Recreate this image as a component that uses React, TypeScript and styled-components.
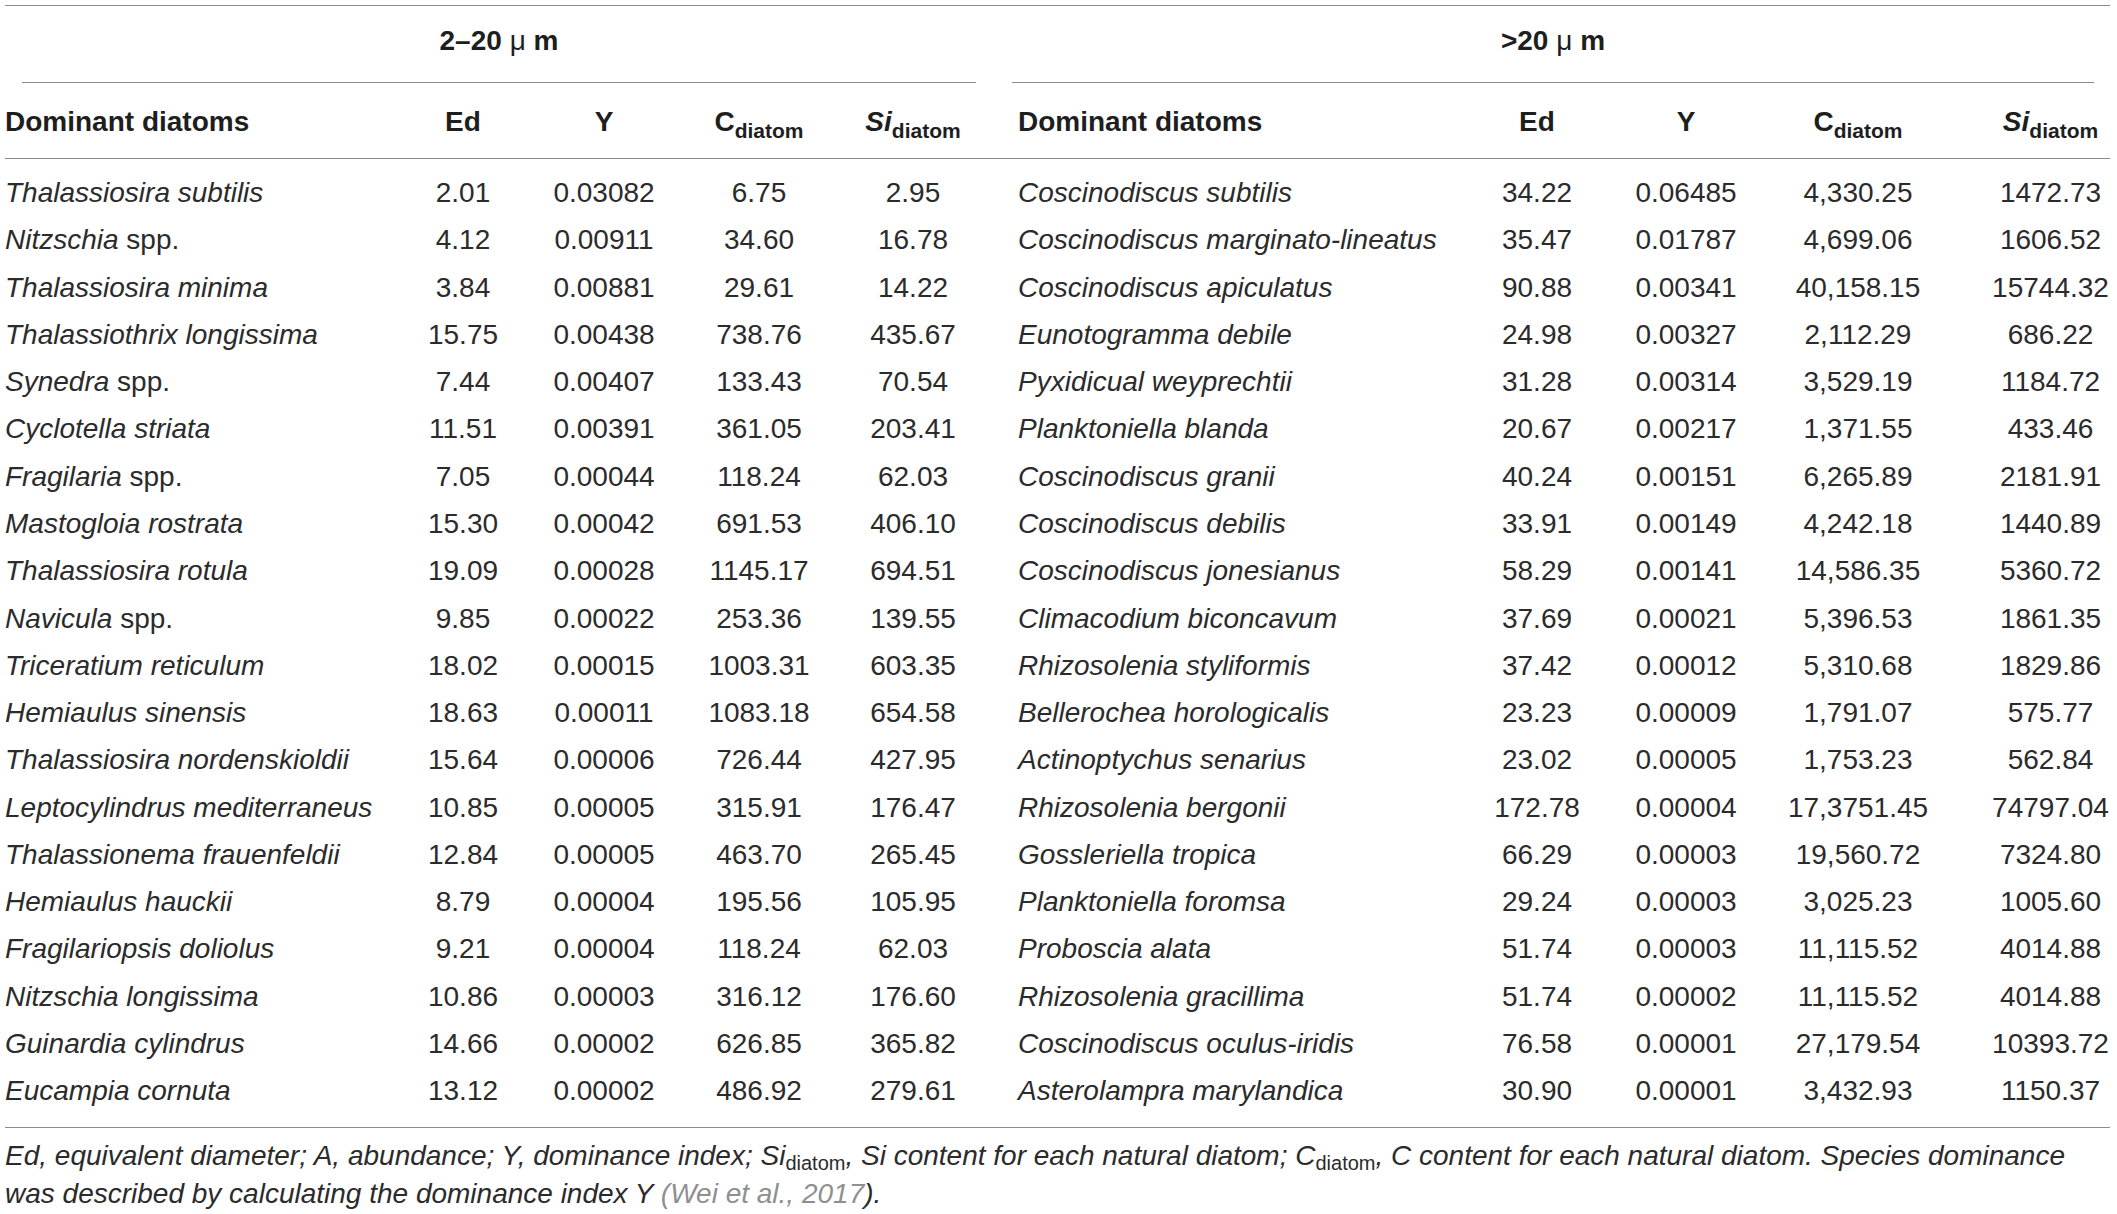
import React from "react";
import styled, { createGlobalStyle } from "styled-components";

const GlobalStyle = createGlobalStyle`
  html, body {
    margin: 0;
    padding: 0;
    background: #ffffff;
  }
  body {
    font-family: "Liberation Sans", Arial, Helvetica, sans-serif;
    color: #2b2b2b;
  }
`;

const COLS = "390px 136px 146px 164px 144px 33px 447px 144px 154px 190px 157px";
const RULE = "#8c8c8c";

const Page = styled.div`
  padding: 5px 0 0 5px;
`;

const Table = styled.div`
  width: 2105px;
  border-top: 1px solid ${RULE};
`;

const GroupRow = styled.div`
  display: grid;
  grid-template-columns: ${COLS};
`;

const GroupTitle = styled.div<{ $col: string; $inL: number; $inR: number }>`
  grid-column: ${(p) => p.$col};
  margin-left: ${(p) => p.$inL}px;
  margin-right: ${(p) => p.$inR}px;
  padding: 20.5px 0 27.5px;
  border-bottom: 1px solid ${RULE};
  text-align: center;
  font-size: 28px;
  line-height: 28px;
  font-weight: 700;
  color: #1e1e1e;
`;

const Mu = styled.span`
  font-weight: 400;
`;

const HeadRow = styled.div`
  display: grid;
  grid-template-columns: ${COLS};
  padding: 24.5px 0 22.5px;
  border-bottom: 1px solid ${RULE};
`;

const HeadCell = styled.div<{ $align?: "left" | "center"; $pl?: number }>`
  text-align: ${(p) => p.$align || "center"};
  padding-left: ${(p) => p.$pl || 0}px;
  font-size: 28px;
  line-height: 28px;
  font-weight: 700;
  color: #1e1e1e;
  white-space: nowrap;
`;

const HeadSub = styled.sub`
  font-size: 21px;
  font-style: normal;
  font-weight: 700;
  vertical-align: -7px;
  line-height: 0;
`;

const Body = styled.div`
  padding: 10.35px 0 12px;
  border-bottom: 1px solid ${RULE};
`;

const Row = styled.div`
  display: grid;
  grid-template-columns: ${COLS};
`;

const Cell = styled.div<{ $align?: "left" | "center"; $pl?: number }>`
  padding: 9.65px 0 9.65px ${(p) => p.$pl || 0}px;
  text-align: ${(p) => p.$align || "center"};
  font-size: 28px;
  line-height: 28px;
  white-space: nowrap;
  color: #2b2b2b;
`;

const Gap = styled.div``;

const Footnote = styled.p`
  margin: 0;
  width: 2105px;
  padding-top: 9px;
  font-size: 28px;
  line-height: 38px;
  font-style: italic;
  color: #2b2b2b;
`;

const NoteSub = styled.sub`
  font-size: 20px;
  font-style: normal;
  vertical-align: -5px;
  line-height: 0;
`;

const Cite = styled.span`
  color: #8f8f8f;
`;

type Name = { genus: string; spp?: boolean };
type Datum = [Name, string, string, string, string];

const n = (genus: string, spp = false): Name => ({ genus, spp });

const LEFT: Datum[] = [
  [n("Thalassiosira subtilis"), "2.01", "0.03082", "6.75", "2.95"],
  [n("Nitzschia", true), "4.12", "0.00911", "34.60", "16.78"],
  [n("Thalassiosira minima"), "3.84", "0.00881", "29.61", "14.22"],
  [n("Thalassiothrix longissima"), "15.75", "0.00438", "738.76", "435.67"],
  [n("Synedra", true), "7.44", "0.00407", "133.43", "70.54"],
  [n("Cyclotella striata"), "11.51", "0.00391", "361.05", "203.41"],
  [n("Fragilaria", true), "7.05", "0.00044", "118.24", "62.03"],
  [n("Mastogloia rostrata"), "15.30", "0.00042", "691.53", "406.10"],
  [n("Thalassiosira rotula"), "19.09", "0.00028", "1145.17", "694.51"],
  [n("Navicula", true), "9.85", "0.00022", "253.36", "139.55"],
  [n("Triceratium reticulum"), "18.02", "0.00015", "1003.31", "603.35"],
  [n("Hemiaulus sinensis"), "18.63", "0.00011", "1083.18", "654.58"],
  [n("Thalassiosira nordenskioldii"), "15.64", "0.00006", "726.44", "427.95"],
  [n("Leptocylindrus mediterraneus"), "10.85", "0.00005", "315.91", "176.47"],
  [n("Thalassionema frauenfeldii"), "12.84", "0.00005", "463.70", "265.45"],
  [n("Hemiaulus hauckii"), "8.79", "0.00004", "195.56", "105.95"],
  [n("Fragilariopsis doliolus"), "9.21", "0.00004", "118.24", "62.03"],
  [n("Nitzschia longissima"), "10.86", "0.00003", "316.12", "176.60"],
  [n("Guinardia cylindrus"), "14.66", "0.00002", "626.85", "365.82"],
  [n("Eucampia cornuta"), "13.12", "0.00002", "486.92", "279.61"],
];

const RIGHT: Datum[] = [
  [n("Coscinodiscus subtilis"), "34.22", "0.06485", "4,330.25", "1472.73"],
  [n("Coscinodiscus marginato-lineatus"), "35.47", "0.01787", "4,699.06", "1606.52"],
  [n("Coscinodiscus apiculatus"), "90.88", "0.00341", "40,158.15", "15744.32"],
  [n("Eunotogramma debile"), "24.98", "0.00327", "2,112.29", "686.22"],
  [n("Pyxidicual weyprechtii"), "31.28", "0.00314", "3,529.19", "1184.72"],
  [n("Planktoniella blanda"), "20.67", "0.00217", "1,371.55", "433.46"],
  [n("Coscinodiscus granii"), "40.24", "0.00151", "6,265.89", "2181.91"],
  [n("Coscinodiscus debilis"), "33.91", "0.00149", "4,242.18", "1440.89"],
  [n("Coscinodiscus jonesianus"), "58.29", "0.00141", "14,586.35", "5360.72"],
  [n("Climacodium biconcavum"), "37.69", "0.00021", "5,396.53", "1861.35"],
  [n("Rhizosolenia styliformis"), "37.42", "0.00012", "5,310.68", "1829.86"],
  [n("Bellerochea horologicalis"), "23.23", "0.00009", "1,791.07", "575.77"],
  [n("Actinoptychus senarius"), "23.02", "0.00005", "1,753.23", "562.84"],
  [n("Rhizosolenia bergonii"), "172.78", "0.00004", "17,3751.45", "74797.04"],
  [n("Gossleriella tropica"), "66.29", "0.00003", "19,560.72", "7324.80"],
  [n("Planktoniella foromsa"), "29.24", "0.00003", "3,025.23", "1005.60"],
  [n("Proboscia alata"), "51.74", "0.00003", "11,115.52", "4014.88"],
  [n("Rhizosolenia gracillima"), "51.74", "0.00002", "11,115.52", "4014.88"],
  [n("Coscinodiscus oculus-iridis"), "76.58", "0.00001", "27,179.54", "10393.72"],
  [n("Asterolampra marylandica"), "30.90", "0.00001", "3,432.93", "1150.37"],
];

const SpeciesName: React.FC<{ name: Name }> = ({ name }) => (
  <>
    <i>{name.genus}</i>
    {name.spp ? " spp." : ""}
  </>
);

const ColumnHeads: React.FC<{ lastPad: number }> = ({ lastPad }) => (
  <>
    <HeadCell $align="left">Dominant diatoms</HeadCell>
    <HeadCell>Ed</HeadCell>
    <HeadCell>Y</HeadCell>
    <HeadCell>
      C<HeadSub>diatom</HeadSub>
    </HeadCell>
    <HeadCell $pl={lastPad}>
      <i>Si</i>
      <HeadSub>diatom</HeadSub>
    </HeadCell>
  </>
);

const DataCells: React.FC<{ d: Datum; lastPad: number }> = ({ d, lastPad }) => (
  <>
    <Cell $align="left">
      <SpeciesName name={d[0]} />
    </Cell>
    <Cell>{d[1]}</Cell>
    <Cell>{d[2]}</Cell>
    <Cell>{d[3]}</Cell>
    <Cell $pl={lastPad}>{d[4]}</Cell>
  </>
);

export default function App() {
  return (
    <>
      <GlobalStyle />
      <Page>
        <Table>
          <GroupRow>
            <GroupTitle $col="1 / 6" $inL={17} $inR={9}>
              2–20 <Mu>μ</Mu> m
            </GroupTitle>
            <GroupTitle $col="6 / 12" $inL={27} $inR={16}>
              &gt;20 <Mu>μ</Mu> m
            </GroupTitle>
          </GroupRow>
          <HeadRow>
            <ColumnHeads lastPad={0} />
            <Gap />
            <ColumnHeads lastPad={38} />
          </HeadRow>
          <Body>
            {LEFT.map((l, i) => (
              <Row key={i}>
                <DataCells d={l} lastPad={0} />
                <Gap />
                <DataCells d={RIGHT[i]} lastPad={38} />
              </Row>
            ))}
          </Body>
        </Table>
        <Footnote>
          Ed, equivalent diameter; A, abundance; Y, dominance index; Si
          <NoteSub>diatom</NoteSub>, Si content for each natural diatom; C
          <NoteSub>diatom</NoteSub>, C content for each natural diatom. Species
          dominance was described by calculating the dominance index Y{" "}
          <Cite>(Wei et al., 2017</Cite>).
        </Footnote>
      </Page>
    </>
  );
}
